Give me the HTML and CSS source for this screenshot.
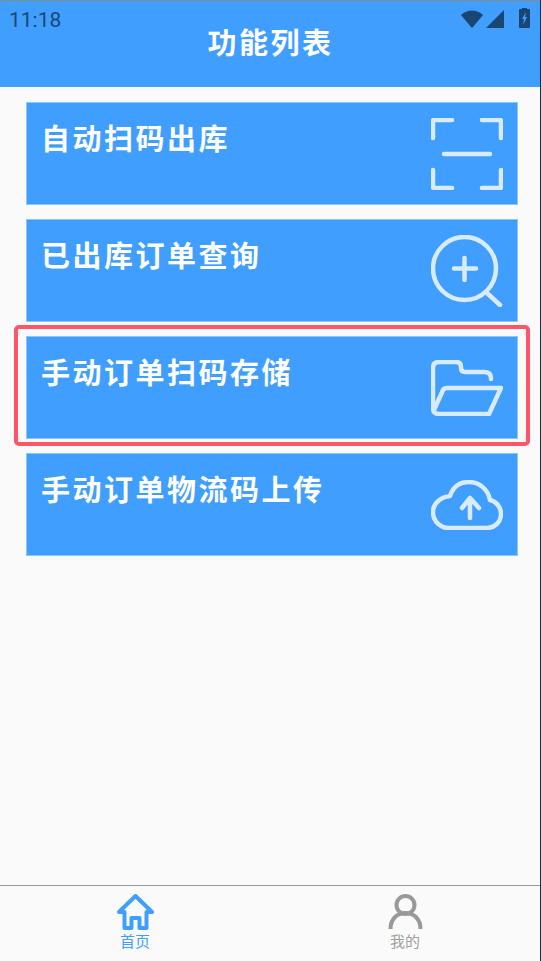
FILE: index.html
```html
<!DOCTYPE html>
<html lang="zh-CN">
<head>
    <meta charset="UTF-8">
    <meta name="viewport" content="width=device-width, initial-scale=1.0">
    <title>功能列表</title>
    <link rel="stylesheet" href="styles.css">
</head>
<body>
<div class="app">
    <header class="top-bar">
        <div class="status-bar">
            <span class="status-time">11:18</span>
            <div class="status-icons">
                <svg class="status-wifi" width="22" height="18" viewBox="0 0 22 18"><path d="M0 5 C6 -1 16 -1 22 5 L12 17 Q11 18 10 17 Z" fill="#1b4674"/></svg>
                <svg class="status-signal" width="18" height="18" viewBox="0 0 18 18"><path d="M0 18 L18 0 V18 Z" fill="#1b4674"/></svg>
                <svg class="status-battery" width="11" height="20" viewBox="0 0 11 20"><path d="M3 1 V0 H8 V1 H10 Q11 1 11 2 V19 Q11 20 10 20 H1 Q0 20 0 19 V2 Q0 1 1 1 Z" fill="#1b4674"/><path d="M7 4 L3 11 H5 L4 17 L8 9 H6 Z" fill="#409eff"/></svg>
            </div>
        </div>
        <h1 class="page-title">功能列表</h1>
    </header>

    <main class="menu-list">
        <a class="menu-card">
            <span class="menu-label">自动扫码出库</span>
            <svg class="menu-icon" width="72" height="72" viewBox="0 0 72 72">
                <path d="M2 20 V3 Q2 2 3 2 H21 M51 2 H69 Q70 2 70 3 V20 M2 52 V69 Q2 70 3 70 H21 M51 70 H69 Q70 70 70 69 V52 M13 36 H59"/>
            </svg>
        </a>
        <a class="menu-card">
            <span class="menu-label">已出库订单查询</span>
            <svg class="menu-icon" width="72" height="72" viewBox="0 0 72 72">
                <circle cx="33.500" cy="33.500" r="31.500"/>
                <path d="M33.500 23 V45 M23 33.500 H45 M56 58 L69 70"/>
            </svg>
        </a>
        <a class="menu-card menu-card-marked">
            <span class="menu-label">手动订单扫码存储</span>
            <svg class="menu-icon" width="72" height="56" viewBox="0 0 72 56">
                <path d="M60 19 V18 Q60 12 53 12 H34 Q30 12 30 8 V7 Q30 2 25 2 H8 Q2 2 2 8 V48 Q2 54 8 54 H58 L70 28 H16 Q13 28 12 30 L3 50"/>
            </svg>
        </a>
        <a class="menu-card">
            <span class="menu-label">手动订单物流码上传</span>
            <svg class="menu-icon" width="72" height="50" viewBox="0 0 72 50">
                <path d="M18 48 H55 C64 48 70 42 70 34 C70 26 64 21 59 20 C57 9 48 2 38 2 C29 2 22 7 19 16 C9 17 2 24 2 32 C2 41 9 48 18 48 Z M39 38 V18 M31 28 L39 18 L48 28"/>
            </svg>
        </a>
    </main>

    <nav class="tab-bar">
        <a class="tab-item tab-item-active">
            <svg width="37" height="36" viewBox="0 0 37 36">
                <path d="M2 18 L18.500 2 L35 18 H29.500 V34 H22.500 V24 H14.500 V34 H7.500 V18 Z"/>
            </svg>
            <span>首页</span>
        </a>
        <a class="tab-item">
            <svg width="37" height="36" viewBox="0 0 37 36">
                <circle cx="18.500" cy="11" r="9"/>
                <path d="M3.500 35 C3.500 25 10 19 18.500 19 C27 19 33.500 25 33.500 35"/>
            </svg>
            <span>我的</span>
        </a>
    </nav>
</div>
</body>
</html>
```

FILE: styles.css
```css
* {
    box-sizing: border-box;
}
html, body {
    margin: 0;
    padding: 0;
}
body {
    font-family: "Roboto", "Noto Sans CJK SC", sans-serif;
    background-color: #fafafa;
}
.app {
    display: flex;
    flex-direction: column;
    height: 961px;
    border-right: 1px solid #2a2a3a;
}
.top-bar {
    height: 87px;
    padding: 0 0 0 1px;
    background-color: #409eff;
    border-top: 1px solid #8a8a8a;
}
.status-bar {
    display: flex;
    justify-content: space-between;
    align-items: flex-start;
    height: 24px;
    padding: 7px 10px 0 8px;
}
.status-time {
    font-size: 21px;
    line-height: 24px;
    color: #1b4674;
}
.status-icons {
    display: flex;
    align-items: flex-start;
    gap: 3px;
    margin-top: 1px;
}
.status-wifi,
.status-signal {
    margin-top: 1px;
}
.status-battery {
    margin-left: 12px;
    margin-top: -1px;
}
.page-title {
    margin: 0;
    font-family: "Noto Sans CJK SC", sans-serif;
    font-size: 29px;
    line-height: 32px;
    font-weight: 700;
    letter-spacing: 2.500px;
    color: #fff;
    text-align: center;
}
.menu-list {
    flex: 1;
    display: flex;
    flex-direction: column;
    gap: 14px;
    padding: 15px 22px 0 26px;
}
.menu-card {
    position: relative;
    display: flex;
    justify-content: space-between;
    align-items: center;
    height: 103px;
    padding: 0 14px 0 15px;
    background-color: #409eff;
    border: 1px solid #8cc5ff;
}
.menu-card-marked::after {
    content: "";
    position: absolute;
    top: -12px;
    left: -13px;
    right: -13px;
    bottom: -8px;
    border: 4px solid #ff5566;
    border-radius: 5px;
}
.menu-label {
    align-self: flex-start;
    margin-top: 16px;
    margin-left: -1px;
    font-family: "Noto Sans CJK SC", sans-serif;
    font-size: 29px;
    line-height: 36px;
    font-weight: 700;
    letter-spacing: 2.500px;
    color: #fff;
}
.menu-icon {
    fill: none;
    stroke: #d9ecff;
    stroke-width: 4.500;
    stroke-linecap: round;
    stroke-linejoin: round;
}
.tab-bar {
    display: flex;
    height: 76px;
    border-top: 1px solid #9a9a9a;
}
.tab-item {
    flex: 1;
    display: flex;
    flex-direction: column;
    align-items: center;
    padding-top: 8px;
    font-family: "Noto Sans CJK SC", sans-serif;
    font-size: 15px;
    line-height: 18px;
    color: #a0a0a0;
}
.tab-item span {
    margin-top: 2px;
}
.tab-item svg {
    fill: none;
    stroke: #999;
    stroke-width: 4;
    stroke-linejoin: round;
}
.tab-item-active {
    color: #409eff;
}
.tab-item-active svg {
    stroke: #409eff;
}
```
